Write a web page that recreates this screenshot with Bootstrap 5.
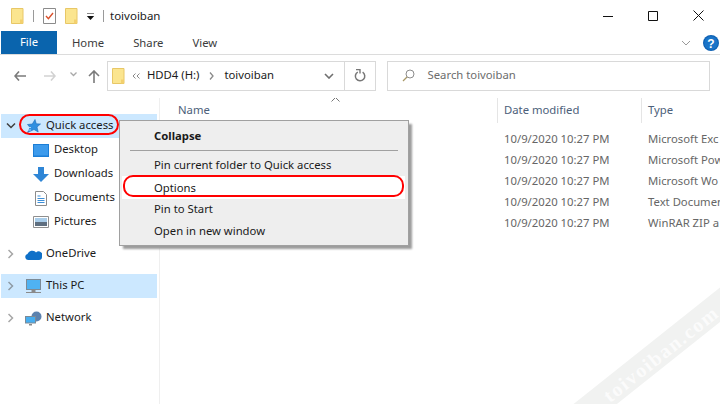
<!doctype html>
<html lang="en"><head><meta charset="utf-8"><title>toivoiban</title>
<link href="https://cdn.jsdelivr.net/npm/bootstrap@5.3.0/dist/css/bootstrap.min.css" rel="stylesheet">
<style>
html,body{margin:0;height:404px;overflow:hidden;background:#fff}
body{font:11.3px/16px "Noto Sans","Open Sans",sans-serif;color:#1b1b1b;position:relative;width:720px}
svg{display:block;flex:none}
.titlebar{height:31px;padding-left:11px}
.qsep{width:1px;height:12px;background:#9a9a9a;margin:0 9px}
.wintitle{font-size:11.5px;margin-top:1px}
.winbtns{margin-left:auto;padding-right:16px;gap:35px}
.ribbon{height:24px;border-bottom:1px solid #dcdcdc}
.filetab{width:56px;margin-left:1px;height:23px;background:#0a64ad;color:#fff;text-align:center;line-height:22px}
.rtab{color:#3c3c3c;line-height:23px}
.addr{height:43px;padding:5px 10px 7px 14px}
.boxed{height:30px;border:1px solid #d9d9d9;background:#fff}
.boxed span{margin-top:-2px}
.pathbox{width:269px;margin-left:0}
.searchbox{width:324px;margin-left:11px;padding-left:14px;color:#6d6d6d}
.refresh{width:31px;height:28px;border-left:1px solid #d9d9d9}
.mainarea{height:307px}
.sidepane{width:160px;border-right:1px solid #efefef;padding-top:16px}
.trow{height:24px;margin-left:1px;width:156px}
.trow span{margin-top:-2px}
.trow.sel{background:#cce8ff}
.chev{width:20px;display:flex;justify-content:center;margin-left:0}
.ico1{width:25px;padding-left:5px}
.child{padding-left:32px}
.child svg{margin-right:5px}
.gaptop{margin-top:8px}
.listpane{position:relative;flex:1;overflow:hidden}
.hdr{height:25px;color:#4c607a}
.hname{width:337px;padding-left:18px;position:relative;line-height:23px}
.hcol{border-left:1px solid #e5e5e5;height:25px;line-height:23px;padding-left:6px}
.caret{position:absolute;left:171px;top:-1px}
.frows{padding-top:6px;margin-left:344px;color:#666}
.frow{height:21px;line-height:19px;white-space:nowrap}
.fdate{width:144px;flex:none}
.ctxmenu{position:absolute;left:119px;top:120px;width:290px;height:126px;background:#eee;border:1px solid #a0a0a0;box-shadow:3px 3px 2px -0.5px #9c9c9c;padding-top:4px;z-index:3}
.mitem{height:22px;line-height:22px;padding-left:34px;color:#1a1a1a}
.mitem.hot{background:#fff;margin:0 3px 0 2px;padding-left:32px;height:23px;line-height:23px;margin-top:0;margin-bottom:-1px}
.mfirst{font-weight:700}
.msep{height:1px;background:#a0a0a0;margin:3px 10px 3px 10px}
.oval{position:absolute;border:2px solid #f00;z-index:4}
.oval1{left:19px;top:114px;width:100px;height:21px;border-radius:11px}
.oval2{left:123px;top:175px;width:281px;height:22px;border-radius:10px}
.stampclip{position:absolute;left:480px;top:270px;width:240px;height:134px;overflow:hidden;z-index:5}
.stamp{position:absolute;left:30px;top:69px;width:300px;height:27px;background:#f1f2f1;transform:rotate(-38.500deg);color:#fbfbfb;font:700 20px/30px "Liberation Serif",serif;text-align:center;letter-spacing:1.600px}
</style></head><body>

<div class="titlebar d-flex align-items-center">
<svg width="13" height="16" viewBox="0 0 13 16"><path d="M.5.500h11.500v15H.5z" fill="#fbe58f" stroke="#e8c766"/><path d="M9 11.500h3v4H9z" fill="#f3d06e"/></svg>
<span class="qsep"></span>
<svg width="13" height="16" viewBox="0 0 13 16"><path d="M.5.500h12v15H.5z" fill="#fff" stroke="#8b8b8b"/><path d="M3 8l2.400 2.600L10 5" fill="none" stroke="#d94f2a" stroke-width="1.400"/></svg>
<svg width="13" height="16" viewBox="0 0 13 16" style="margin-left:9px"><path d="M.5.500h11.500v15H.5z" fill="#fbe58f" stroke="#e8c766"/><path d="M9 11.500h3v4H9z" fill="#f3d06e"/></svg>
<svg width="9" height="8" viewBox="0 0 9 8" style="margin-left:8px;margin-top:3px"><path d="M1 0h7" stroke="#111"/><path d="M.8 3h7.400L4.500 7z" fill="#111"/></svg>
<span class="qsep" style="margin:0 6px 0 8px"></span>
<span class="wintitle">toivoiban</span>
<div class="winbtns d-flex align-items-center">
<svg width="10" height="10" viewBox="0 0 10 10"><path d="M0 5.500h10" stroke="#111"/></svg>
<svg width="10" height="10" viewBox="0 0 10 10"><path d="M.5.500h9v9h-9z" fill="none" stroke="#111"/></svg>
<svg width="11" height="11" viewBox="0 0 11 11"><path d="M.5.500l10 10M10.500.5l-10 10" stroke="#111"/></svg>
</div>
</div>

<div class="ribbon d-flex align-items-start">
<div class="filetab">File</div>
<span class="rtab" style="margin-left:15px">Home</span>
<span class="rtab" style="margin-left:29px">Share</span>
<span class="rtab" style="margin-left:29px">View</span>
<div class="ms-auto d-flex align-items-center" style="height:23px;padding-right:1px">
<svg width="10" height="6" viewBox="0 0 10 6" style="margin-right:12px"><path d="M1 1l4 4 4-4" fill="none" stroke="#9a9a9a"/></svg>
<svg width="16" height="16" viewBox="0 0 16 16"><circle cx="8" cy="8" r="8" fill="#0f62b4"/><circle cx="8" cy="8" r="6.800" fill="#1a74c8"/><text x="8" y="12.500" text-anchor="middle" font-size="12" font-weight="700" fill="#fff" font-family="Liberation Sans">?</text></svg>
</div>
</div>

<div class="addr d-flex align-items-center">
<svg width="12" height="10" viewBox="0 0 12 10"><path d="M5 .5L1 5l4 4.500M1 5h11" fill="none" stroke="#7b7b7b" stroke-width="1.600"/></svg>
<svg width="12" height="10" viewBox="0 0 12 10" style="margin-left:18px"><path d="M7 .5L11 5l-4 4.500M11 5H0" fill="none" stroke="#d2d2d2" stroke-width="1.600"/></svg>
<svg width="7" height="5" viewBox="0 0 7 5" style="margin-left:14px;margin-bottom:2px"><path d="M.5.500L3.500 3.500 6.500.5" fill="none" stroke="#a9a9a9" stroke-width="1.300"/></svg>
<svg width="12" height="13" viewBox="0 0 12 13" style="margin-left:11px;margin-top:2px"><path d="M1 6l5-5 5 5M6 1v12" fill="none" stroke="#7b7b7b" stroke-width="1.600"/></svg>
<div class="boxed pathbox d-flex align-items-center" style="margin-left:7px">
<svg width="13" height="16" viewBox="0 0 13 16" style="margin-left:4px"><path d="M.5.500h11.500v15H.5z" fill="#fbe58f" stroke="#e8c766"/><path d="M9 11.500h3v4H9z" fill="#f3d06e"/></svg>
<svg width="8" height="6" viewBox="0 0 8 6" style="margin-left:7px"><path d="M3.500.5L1 3l2.500 2.500M7.500.5L5 3l2.500 2.500" fill="none" stroke="#8a8a8a"/></svg>
<span style="margin-left:7px">HDD4 (H:)</span>
<svg width="5" height="8" viewBox="0 0 5 8" style="margin-left:10px"><path d="M1 .5L4 4 1 7.500" fill="none" stroke="#8a8a8a" stroke-width="1.300"/></svg>
<span style="margin-left:10px">toivoiban</span>
<svg width="10" height="6" viewBox="0 0 10 6" class="ms-auto" style="margin-right:10px"><path d="M1 1l4 4 4-4" fill="none" stroke="#6f6f6f" stroke-width="1.600"/></svg>
<div class="refresh d-flex align-items-center justify-content-center">
<svg width="12" height="13" viewBox="0 0 12 13"><path d="M3.200 3.400A4.700 4.700 0 1 0 8 2.900" fill="none" stroke="#777" stroke-width="1.500" transform="rotate(8 6 7.500)"/><path d="M2 .5h4v4" fill="none" stroke="#777" stroke-width="1.400"/></svg>
</div>
</div>
<div class="boxed searchbox d-flex align-items-center">
<svg width="13" height="13" viewBox="0 0 13 13"><circle cx="8" cy="5" r="4" fill="none" stroke="#8c8c8c"/><path d="M5 8l-4 4" stroke="#a89868" stroke-width="1.300"/></svg>
<span style="margin-left:13px">Search toivoiban</span>
</div>
</div>

<div class="mainarea d-flex">
<div class="sidepane">
<div class="trow sel d-flex align-items-center">
<div class="chev"><svg width="10" height="6" viewBox="0 0 10 6"><path d="M1 .5l4 4 4-4" fill="none" stroke="#404040" stroke-width="1.500"/></svg></div>
<div class="ico1"><svg width="15" height="14" viewBox="0 0 15 14"><path d="M9 .5l1.300 4.300L14.500 5l-3.500 3 1.200 5L8 10.500 1.500 13.500 4 8.500 1.500 5.500l4.800-.5z" fill="#2f8fe0" stroke="#1c6cb8" stroke-width=".6"/><path d="M0 8.500h5M1 11h4" stroke="#cce8ff" stroke-width=".8"/></svg></div>
<span>Quick access</span></div>
<div class="trow child d-flex align-items-center">
<svg width="16" height="13" viewBox="0 0 16 13"><path d="M0 0h16v13H0z" fill="#1c7ed6"/><path d="M1 1h14v10.500H1z" fill="#3d9bec"/></svg><span>Desktop</span></div>
<div class="trow child d-flex align-items-center">
<svg width="16" height="15" viewBox="0 0 16 15"><path d="M5 0h6v7h5l-8 8-8-8h5z" fill="#2f86d6"/></svg><span>Downloads</span></div>
<div class="trow child d-flex align-items-center">
<svg width="16" height="15" viewBox="0 0 16 15"><path d="M2.500.5h8l3 3v11h-11z" fill="#fff" stroke="#8c8c8c"/><path d="M4.500 5h3M4.500 7.500h7M4.500 9.500h7M4.500 11.500h7" stroke="#3d8fd8"/></svg><span>Documents</span></div>
<div class="trow child d-flex align-items-center">
<svg width="16" height="12" viewBox="0 0 16 12"><path d="M.5.500h15v11H.5z" fill="#fff" stroke="#8f8f8f"/><path d="M2 2h12v4H2z" fill="#a9cdea"/><path d="M2 6h12v4H2z" fill="#5f6f80"/></svg><span>Pictures</span></div>

<div class="trow gaptop d-flex align-items-center">
<div class="chev"><svg width="6" height="10" viewBox="0 0 6 10"><path d="M.5 1l4 4-4 4" fill="none" stroke="#a6a6a6" stroke-width="1.500"/></svg></div>
<div class="ico1"><svg width="17" height="11" viewBox="0 0 17 11" style="margin-left:-1px"><path d="M3 11a3 3 0 0 1-.500-5.900A5 5 0 0 1 11 3.500 3.800 3.800 0 0 1 17 8c0 1.800-1 3-3 3z" fill="#0f70c8"/></svg></div>
<span>OneDrive</span></div>
<div class="trow sel gaptop d-flex align-items-center">
<div class="chev"><svg width="6" height="10" viewBox="0 0 6 10"><path d="M.5 1l4 4-4 4" fill="none" stroke="#8e9aa5" stroke-width="1.500"/></svg></div>
<div class="ico1"><svg width="17" height="15" viewBox="0 0 17 15" style="margin-left:-1px"><path d="M1 0h15v11H1z" fill="#7c8a96"/><path d="M2 1h13v9H2z" fill="#4fb2f2"/><path d="M7 11h3v2H7zM1 13.500h15" stroke="#8a8a8a" fill="#8a8a8a"/></svg></div>
<span>This PC</span></div>
<div class="trow gaptop d-flex align-items-center">
<div class="chev"><svg width="6" height="10" viewBox="0 0 6 10"><path d="M.5 1l4 4-4 4" fill="none" stroke="#a6a6a6" stroke-width="1.500"/></svg></div>
<div class="ico1"><svg width="17" height="15" viewBox="0 0 17 15" style="margin-left:-1px"><circle cx="11.500" cy="5.500" r="5" fill="#5c82ae"/><path d="M0 5h11v7.500H0z" fill="#7c8a96"/><path d="M1 6h9v5.500H1z" fill="#47aef0"/><path d="M4 13h3v1.500H4z" fill="#8a8a8a"/></svg></div>
<span>Network</span></div>
</div>

<div class="listpane">
<div class="hdr d-flex">
<div class="hname">Name<svg class="caret" width="9" height="5" viewBox="0 0 9 5"><path d="M.5 4.500l4-4 4 4" fill="none" stroke="#777"/></svg></div>
<div class="hcol" style="width:144px">Date modified</div>
<div class="hcol" style="flex:1">Type</div>
</div>
<div class="frows">
<div class="frow d-flex"><span class="fdate">10/9/2020 10:27 PM</span><span>Microsoft Exc</span></div>
<div class="frow d-flex"><span class="fdate">10/9/2020 10:27 PM</span><span>Microsoft Pow</span></div>
<div class="frow d-flex"><span class="fdate">10/9/2020 10:27 PM</span><span>Microsoft Wo</span></div>
<div class="frow d-flex"><span class="fdate">10/9/2020 10:27 PM</span><span>Text Documen</span></div>
<div class="frow d-flex"><span class="fdate">10/9/2020 10:27 PM</span><span>WinRAR ZIP a</span></div>
</div>
</div>
</div>

<div class="ctxmenu">
<div class="mitem mfirst">Collapse</div>
<div class="msep"></div>
<div class="mitem">Pin current folder to Quick access</div>
<div class="mitem hot">Options</div>
<div class="mitem">Pin to Start</div>
<div class="mitem">Open in new window</div>
</div>
<div class="oval oval1"></div>
<div class="oval oval2"></div>
<div class="stampclip"><div class="stamp"><span>toivoiban.com</span></div></div>
</body></html>
